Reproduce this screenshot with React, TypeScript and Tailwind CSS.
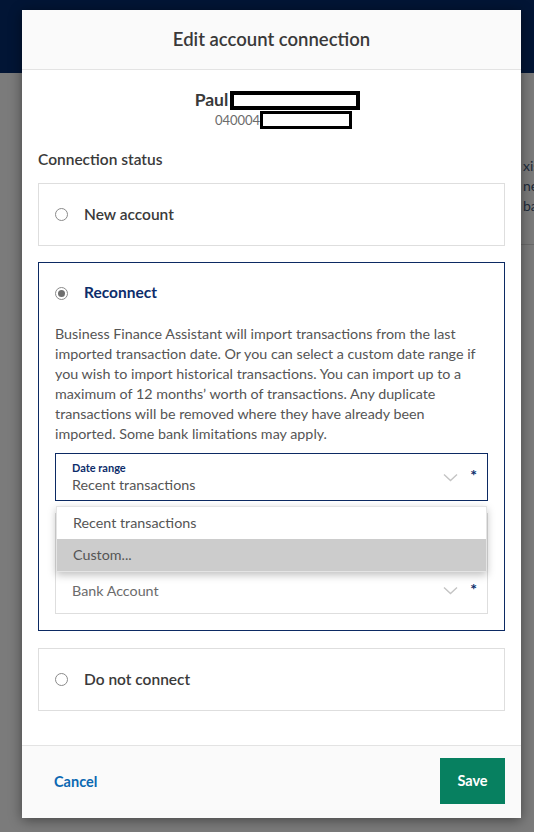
import React from 'react';

const font = { fontFamily: 'Lato, "Open Sans", Arial, sans-serif' };

const infoLines = [
    'Business Finance Assistant will import transactions from the last',
    'imported transaction date. Or you can select a custom date range if',
    'you wish to import historical transactions. You can import up to a',
    'maximum of 12 months’ worth of transactions. Any duplicate',
    'transactions will be removed where they have already been',
    'imported. Some bank limitations may apply.',
];

function Radio({ checked }: { checked?: boolean }) {
    return (
        <span className="w-[13px] h-[13px] rounded-full border border-[#8a8a8a] bg-white flex items-center justify-center shrink-0">
            {checked && <span className="w-[7px] h-[7px] rounded-full bg-[#6f6f6f]" />}
        </span>
    );
}

function Chevron() {
    return (
        <svg width="15" height="9" viewBox="0 0 15 9" className="shrink-0">
            <polyline points="1,1.5 7.5,7.5 14,1.5" fill="none" stroke="#c4c4c4" strokeWidth="1.4" />
        </svg>
    );
}

export default function App() {
    return (
        <div className="relative w-[534px] h-[832px] overflow-hidden bg-[#7b7b7b]" style={font}>
            {/* page behind the overlay */}
            <div className="h-[73px] bg-[#021535]" />
            <div className="absolute left-[523px] top-[156px] flex flex-col text-[14px] leading-[20px] text-[#1d2a3a]">
                <span>xisting</span>
                <span>nes</span>
                <span>bank</span>
            </div>
            <div className="absolute left-[521px] top-[244px] w-[13px] h-px bg-[#6a6a6a]" />

            {/* modal */}
            <div className="absolute left-[22px] top-[10px] w-[499px] h-[808px] bg-white flex flex-col shadow-[0_2px_12px_rgba(0,0,0,0.45)]">
                <div className="h-[60px] shrink-0 bg-[#fafafa] border-b border-[#e3e3e3] flex items-center justify-center">
                    <span className="text-[18.5px] font-semibold text-[#393939]">Edit account connection</span>
                </div>

                <div className="grow px-4">
                    <div className="pt-[19px] flex flex-col items-center">
                        <div className="flex items-center h-[22px] ml-[12px]">
                            <span className="text-[17.5px] font-bold text-[#393939] leading-none">Paul</span>
                            <span className="ml-[2px] w-[130px] h-[19px] border-[4px] border-black bg-white" />
                        </div>
                        <div className="flex items-center h-[20px] -mt-px ml-[24px]">
                            <span className="text-[13px] text-[#6b6b6b] leading-none">040004</span>
                            <span className="w-[92px] h-[18px] border-[3px] border-black bg-white" />
                        </div>
                    </div>

                    <div className="mt-[19px] text-[15.5px] font-semibold text-[#3a3a3a] leading-[20px]">Connection status</div>

                    <div className="mt-[14px] h-[63px] border border-[#dedede] flex items-center gap-[16px] pl-[16px]">
                        <Radio />
                        <span className="text-[15.5px] font-semibold text-[#3a3a3a]">New account</span>
                    </div>

                    <div className="relative mt-[16px] border border-[#0c2a63] px-4 pt-[20px] pb-4">
                        <div className="flex items-center gap-[16px] h-[20px]">
                            <Radio checked />
                            <span className="text-[15.5px] font-bold text-[#0c2d6b]">Reconnect</span>
                        </div>
                        <p className="mt-[21px] text-[14.3px] leading-[20px] text-[#555555]">
                            {infoLines.map((line) => (
                                <span key={line} className="block whitespace-nowrap">{line}</span>
                            ))}
                        </p>

                        <div className="mt-[9px] h-[48px] border border-[#0c2a63] flex items-center pl-4 pr-[10px]">
                            <div className="grow flex flex-col">
                                <span className="text-[11px] font-bold text-[#0c2d6b] leading-[14px]">Date range</span>
                                <span className="text-[14.3px] text-[#555555] leading-[19px]">Recent transactions</span>
                            </div>
                            <Chevron />
                            <span className="ml-[12px] text-[16px] font-bold text-[#0c2d6b] leading-none mb-[4px]">*</span>
                        </div>

                        <div className="mt-[12px] h-[101px] border border-[#dedede] flex items-end pb-[13px] pl-4 pr-[10px]">
                            <span className="grow text-[14.3px] text-[#6b6b6b] leading-[19px]">Bank Account</span>
                            <div className="flex items-center h-[19px]">
                                <Chevron />
                                <span className="ml-[12px] text-[16px] font-bold text-[#0c2d6b] leading-none mb-[4px]">*</span>
                            </div>
                        </div>

                        {/* open select menu */}
                        <div className="absolute left-[17px] right-[17px] top-[243px] bg-white border border-[#e4e4e4] shadow-[0_3px_8px_rgba(0,0,0,0.25)] flex flex-col">
                            <div className="h-[32px] flex items-center pl-4 text-[14.3px] text-[#555555]">Recent transactions</div>
                            <div className="h-[32px] flex items-center pl-4 text-[14.3px] text-[#555555] bg-[#cccccc]">Custom...</div>
                        </div>
                    </div>

                    <div className="mt-[17px] h-[63px] border border-[#dedede] flex items-center gap-[16px] pl-[16px]">
                        <Radio />
                        <span className="text-[15.5px] font-semibold text-[#3a3a3a]">Do not connect</span>
                    </div>
                </div>

                <div className="h-[73px] shrink-0 bg-[#fafafa] border-t border-[#e3e3e3] flex items-center justify-between pl-8 pr-4">
                    <button className="text-[14.5px] font-bold text-[#0b68b2] -mt-[1px]">Cancel</button>
                    <button className="w-[65px] h-[46px] bg-[#078060] text-white text-[14.5px] font-bold -mt-[2px]">Save</button>
                </div>
            </div>
        </div>
    );
}
